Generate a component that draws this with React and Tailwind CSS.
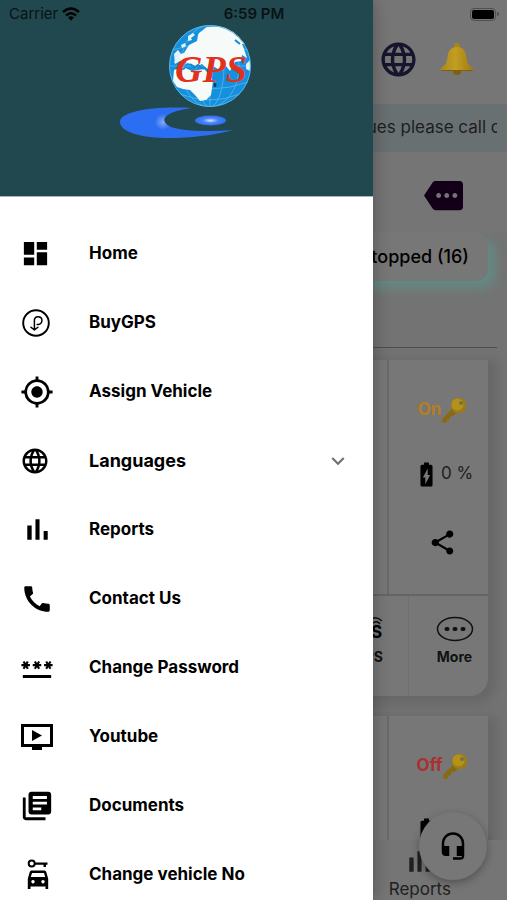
import {
  MdBatteryChargingFull,
  MdCall,
  MdDashboard,
  MdExpandMore,
  MdGpsFixed,
  MdHeadsetMic,
  MdLanguage,
  MdLibraryBooks,
  MdMore,
  MdPassword,
  MdShare,
} from 'react-icons/md'

function BuyIcon({ size }) {
  return (
    <svg width={size} height={size} viewBox="0 0 30 30" fill="none" stroke="currentColor">
      <circle cx="15" cy="15" r="12" strokeWidth="1.8" />
      <path
        d="M13.500 21V11.700a3.600 3.600 0 1 1 3.600 4.600h-1M10.200 19l3.300 2.500 3.300-2.500"
        strokeWidth="1.4"
        strokeLinecap="round"
        strokeLinejoin="round"
      />
    </svg>
  )
}

function BarsIcon({ size }) {
  return (
    <svg width={size} height={size} viewBox="0 0 24 24" fill="currentColor">
      <path d="M5 9.200h3V19H5zM10.600 5h2.800v14h-2.800zM16.200 13H19v6h-2.800z" />
    </svg>
  )
}

function VideoIcon({ size }) {
  return (
    <svg width={size} height={size} viewBox="0 0 34 34" fill="currentColor">
      <path d="M1 4h32v23H22v3H12v-3H1zM4 7v17h26V7z" fillRule="evenodd" />
      <path d="M12 10v11l10-5.500z" />
    </svg>
  )
}

function CarKeyIcon({ size }) {
  return (
    <svg width={size} height={size} viewBox="0 0 34 34" fill="currentColor">
      <circle cx="11.700" cy="5.500" r="3" fill="none" stroke="currentColor" strokeWidth="2" />
      <path d="M15 4.500h12.500v2.300H26V9h-2.500V6.800H15z" />
      <path
        d="M11 12.500h14l1.200 1.200 2 7V31h-2.700v-2.500h-15V31H7.800V20.700l2-7zM12 15l-1.200 4h14.400L24 15zM13 22a1.700 1.700 0 1 0 .01 0zM23 22a1.700 1.700 0 1 0 .01 0z"
        fillRule="evenodd"
      />
    </svg>
  )
}

function WifiIcon() {
  return (
    <svg width="18" height="14" viewBox="0 0 18 14" fill="none" stroke="#000" strokeWidth="2.500">
      <path d="M1 5q8-7 16 0M4 8.500q5-4.500 10 0" />
      <path d="M6.200 10.500q2.800-2.300 5.600 0L9 13.800z" fill="#000" stroke="none" />
    </svg>
  )
}

function Bell() {
  return (
    <svg width="36" height="34" viewBox="0 0 36 34">
      <defs>
        <linearGradient id="bell" x1="0" x2="1">
          <stop offset="0" stopColor="#b08818" />
          <stop offset="0.45" stopColor="#c29e22" />
          <stop offset="1" stopColor="#a07a12" />
        </linearGradient>
      </defs>
      <ellipse cx="18" cy="30" rx="4" ry="3" fill="#80600f" />
      <rect x="15" y="1" width="6" height="8" rx="3" fill="#ab851a" />
      <path
        d="M18 5c-6 0-9 4-9.500 10-.5 6-2 8-6 11-1.500 1.500-1.500 3 .5 3h30c2 0 2-1.500.5-3-4-3-5.500-5-6-11C27 9 24 5 18 5z"
        fill="url(#bell)"
      />
      <path d="M2 28.500h32" stroke="#80600f" strokeWidth="1" />
    </svg>
  )
}

function KeyIcon() {
  return (
    <svg width="26" height="26" viewBox="0 0 26 26">
      <path d="m14 9-13 13 .5 4 4.500-.5v-3h3v-3l3-.5 6-5z" fill="#8a6a10" />
      <circle cx="17.500" cy="8.500" r="7.800" fill="#9c7c14" />
      <circle cx="16.500" cy="7.500" r="6" fill="#b3921c" />
      <circle cx="20" cy="6" r="2" fill="#77703f" />
    </svg>
  )
}

function Logo() {
  return (
    <svg width="134" height="116" viewBox="0 0 134 116" role="img" aria-label="GPS">
      <defs>
        <clipPath id="globe">
          <circle cx="90" cy="42" r="41" />
        </clipPath>
        <radialGradient id="dot">
          <stop offset="0" stopColor="#d3e3ff" />
          <stop offset="0.5" stopColor="#4c82f8" />
          <stop offset="1" stopColor="#2c6ef2" />
        </radialGradient>
        <radialGradient id="swoosh" gradientUnits="userSpaceOnUse" cx="43" cy="98" r="8">
          <stop offset="0" stopColor="#86a8fa" />
          <stop offset="1" stopColor="#2c6ef2" />
        </radialGradient>
      </defs>
      <g clipPath="url(#globe)">
        <circle cx="90" cy="42" r="41" fill="#1590dc" />
        <g fill="none" stroke="#65bceb" strokeWidth="0.7">
          <ellipse cx="90" cy="42" rx="14" ry="41" />
          <ellipse cx="90" cy="42" rx="29" ry="41" />
          <path d="M90 1v82M49 42h82M52 58q38 14 76 0M60 70q30 12 60 0M52 26q38-12 76 0" />
        </g>
        <path
          d="M79 9l8-6 18-1 14 8 7 10-4 0 2 5 3 9-5-3-1 6-6 1-5 9-4-5-5 5-8-5-4 4-7-6-6 3-8-4-5 2-4-4-5 2 3-8 7-2 5-8 8-4 1-6z"
          fill="#f6fbfa"
        />
        <path
          d="M54 46l9-3 9 4 12-2 5 5 4 7-1 7-1 7-5 5-6 1-5-6-5-5-7-1-6-2-4-6z"
          fill="#f6fbfa"
        />
        <path
          d="M54 30l4-4 3 4-2 3 3 3-7 4zM68 12l5-3 2 2-4 3 1 2-4 1zM61 21l4-2 1 3-4 2zM126 40l4-4v11l-4-2z"
          fill="#e3f3f7"
        />
        <path
          d="M59 38l4 2 3-2M70 40l5 3 3-2 6 4M115 16l5 4M60 46l5-2"
          stroke="#1487cf"
          strokeWidth="2"
          fill="none"
        />
        <ellipse cx="95" cy="61" rx="1.500" ry="2" fill="#143c50" />
      </g>
      <circle cx="90" cy="42" r="40.500" fill="none" stroke="#55b5e8" strokeWidth="1" />
      <text
        x="91"
        y="58"
        textAnchor="middle"
        fill="#e0301e"
        className="font-['Liberation_Serif',serif] text-[38px] font-bold italic"
      >
        GPS
      </text>
      <path
        d="M72 84C30 82 0 88 0 98c0 11 26 17 56 16 24-1 43-4 57-8-28 2-50 1-62-3-12-6-9-15 21-19z"
        fill="url(#swoosh)"
      />
      <ellipse cx="90.500" cy="96.500" rx="15.500" ry="5" fill="url(#dot)" />
    </svg>
  )
}

const MENU = [
  { label: 'Home', icon: MdDashboard, size: 31 },
  { label: 'BuyGPS', icon: BuyIcon, size: 32 },
  { label: 'Assign Vehicle', icon: MdGpsFixed, size: 34 },
  { label: 'Languages', icon: MdLanguage, size: 30, expandable: true },
  { label: 'Reports', icon: BarsIcon, size: 35 },
  { label: 'Contact Us', icon: MdCall, size: 34 },
  { label: 'Change Password', icon: MdPassword, size: 34 },
  { label: 'Youtube', icon: VideoIcon, size: 34 },
  { label: 'Documents', icon: MdLibraryBooks, size: 34 },
  { label: 'Change vehicle No', icon: CarKeyIcon, size: 34 },
]

function MenuItem({ label, icon: Icon, size, expandable }) {
  return (
    <li>
      <button
        type="button"
        className={`flex h-[69px] w-full items-center pr-[22px] pl-5 text-left font-bold ${
          expandable ? 'text-lg' : 'text-[17px]'
        }`}
      >
        <span className="w-[69px] shrink-0">
          <Icon size={size} />
        </span>
        <span className="grow">{label}</span>
        {expandable && <MdExpandMore size={26} className="text-[#707070]" />}
      </button>
    </li>
  )
}

function Drawer() {
  return (
    <nav className="absolute inset-y-0 left-0 w-[373px] overflow-hidden bg-white shadow-[0_0_16px_rgba(0,0,0,0.3)]">
      <div className="flex h-[197px] justify-center border-b border-[#a9b5b7] bg-[#21484e] pt-6">
        <Logo />
      </div>
      <ul className="pt-[22px]">
        {MENU.map((item) => (
          <MenuItem key={item.label} {...item} />
        ))}
      </ul>
    </nav>
  )
}

function StatusBar() {
  return (
    <div className="absolute inset-x-0 top-0 grid h-7 grid-cols-3 items-center pr-2 pl-[9px] text-[15px] text-[#081315]">
      <div className="flex items-center gap-1">
        <span>Carrier</span>
        <WifiIcon />
      </div>
      <span className="text-center font-semibold">6:59 PM</span>
      <div className="flex items-center justify-end gap-px">
        <div className="h-[13px] w-[26px] rounded-[4px] border border-[#505050] p-px">
          <div className="h-full rounded-[2px] bg-black" />
        </div>
        <div className="h-1 w-0.5 rounded-r bg-[#505050]" />
      </div>
    </div>
  )
}

function VehicleCard({ status, statusColor }) {
  return (
    <article className="mr-[19px] overflow-hidden rounded-b-[18px] bg-[#777777] shadow-[5px_4px_10px_4px_#686868]">
      <div className="flex h-[236px] justify-end border-b-2 border-[#656565]">
        <div className="flex w-[101px] flex-col items-center border-l-2 border-[#696969] pt-9 pl-2">
          <div className="flex h-7 items-center">
            <span className={`text-[17px] font-bold ${statusColor}`}>{status}</span>
            <KeyIcon />
          </div>
          <div className="mt-9 flex h-7 items-center text-[17px] text-[#202020]">
            <MdBatteryChargingFull size={29} className="text-black" />
            <span>0 %</span>
          </div>
          <button type="button" aria-label="Share" className="mt-10">
            <MdShare size={29} />
          </button>
        </div>
      </div>
      <div className="flex h-[100px] justify-end text-[14px] font-bold text-[#111111]">
        <div className="flex w-[67px] flex-col items-end pt-5 pr-[25px]">
          <svg width="22" height="26" viewBox="0 0 22 26" aria-hidden="true">
            <path d="M9 4q6-5 12 1M12 7q4-3 7 1" fill="none" stroke="#111111" strokeWidth="1.500" />
            <text x="10" y="22" fontSize="17">S</text>
          </svg>
          <span className="mt-1">GPS</span>
        </div>
        <button type="button" className="flex w-20 flex-col items-center border-l border-[#707070] pt-5 pl-3">
          <svg width="38" height="26" viewBox="0 0 38 26" fill="none" stroke="#111111">
            <ellipse cx="19" cy="13" rx="17.500" ry="11.500" strokeWidth="1.500" />
            <path d="M10.500 13h1M18.500 13h1M26.500 13h1" strokeWidth="4" strokeLinecap="round" />
          </svg>
          <span className="mt-1">More</span>
        </button>
      </div>
    </article>
  )
}

export default function App() {
  return (
    <div className="relative h-screen overflow-hidden bg-[#737373] font-['Inter','Liberation_Sans',sans-serif] text-black">
      <main>
        <header className="flex h-26 items-end justify-end gap-5 bg-[#767676] pr-8 pb-6">
          <button type="button" aria-label="Language">
            <MdLanguage size={41} className="text-[#15152d]" />
          </button>
          <button type="button" aria-label="Notifications" className="mb-1">
            <Bell />
          </button>
        </header>
        <div className="flex h-12 items-center justify-end bg-[#697072] pr-2.5">
          <p className="flex h-8 w-[140px] items-center justify-end overflow-hidden text-[17px] whitespace-nowrap text-[#1b1e1f]">
            <span className="-mr-1">For any issues please call o</span>
          </p>
        </div>
        <div className="flex h-[81px] justify-end bg-[#757575] pt-6 pr-11">
          <MdMore size={39} className="text-[#130018]" />
        </div>
        <div className="mr-[19px] flex h-12 items-center justify-end rounded-xl bg-[#777777] pr-[19px] text-lg font-medium shadow-[7px_7px_12px_0px_#628c84]">
          Stopped (16)
        </div>
        <hr className="mt-[66px] mr-2.5 border-[#4d4d4d]" />
        <div className="flex flex-col gap-5 pt-3">
          <VehicleCard status="On" statusColor="text-[#b57e22]" />
          <VehicleCard status="Off" statusColor="text-[#ab3030]" />
        </div>
      </main>
      <footer className="absolute inset-x-0 bottom-0 flex h-15 justify-end bg-[#757575] pr-14">
        <a href="#reports" className="flex flex-col items-center pt-1 text-[17px] leading-5 text-[#202020]">
          <BarsIcon size={35} />
          Reports
        </a>
      </footer>
      <button
        type="button"
        aria-label="Support"
        className="absolute right-5 bottom-5 flex size-[68px] items-center justify-center rounded-full bg-[#777777] shadow-[0_3px_8px_rgba(0,0,0,0.3)]"
      >
        <MdHeadsetMic size={30} />
      </button>
      <Drawer />
      <StatusBar />
    </div>
  )
}
